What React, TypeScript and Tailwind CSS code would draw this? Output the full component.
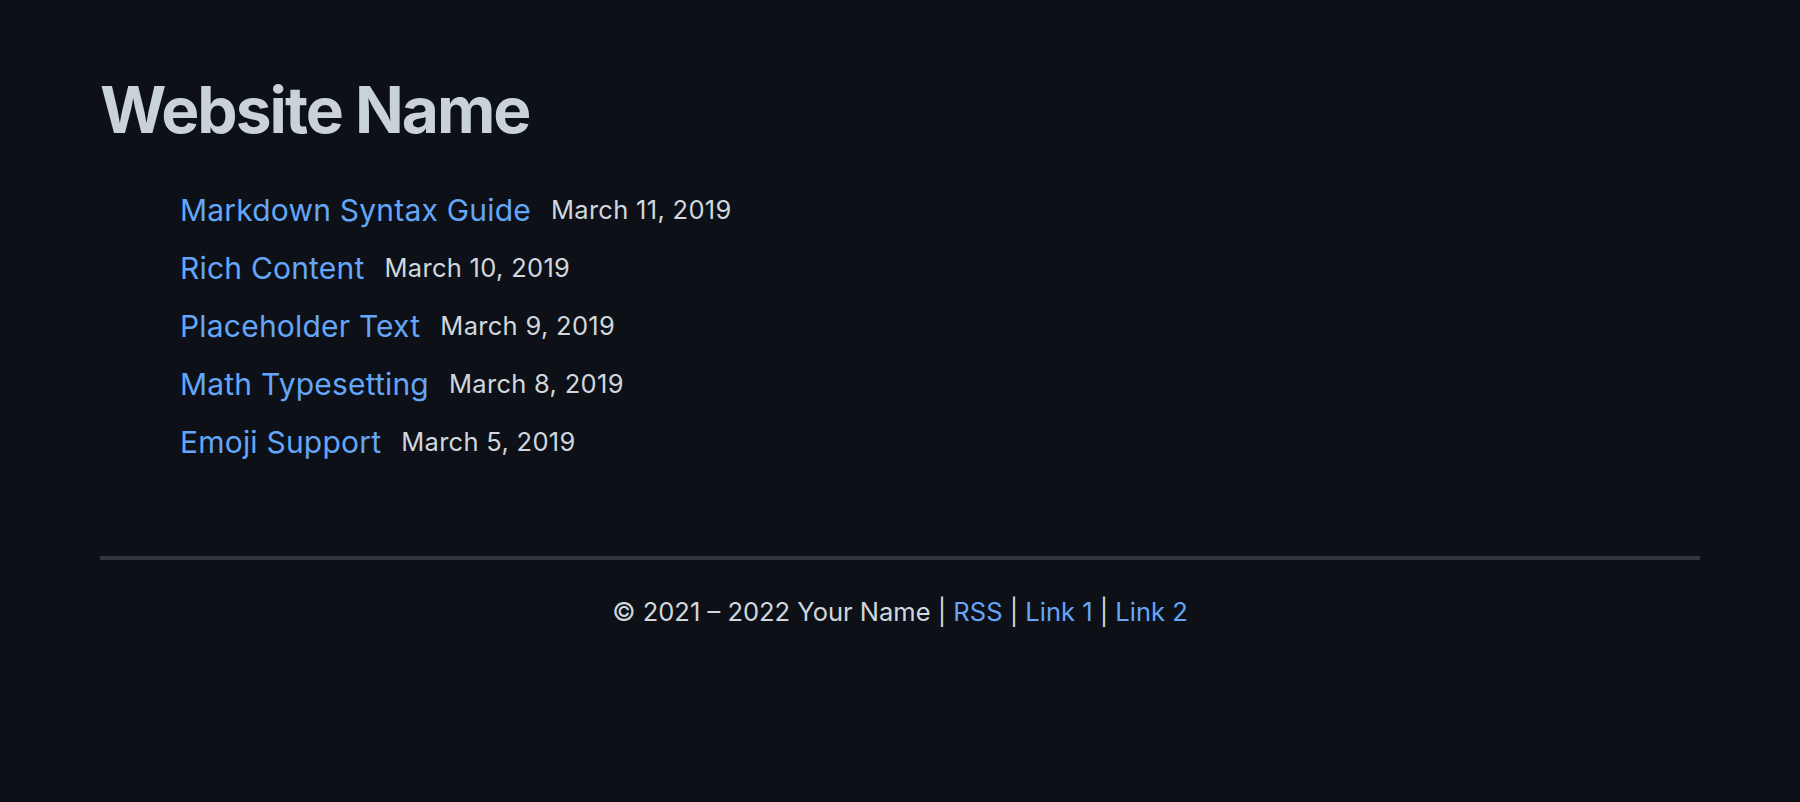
const posts = [
  { title: "Markdown Syntax Guide", date: "March 11, 2019" },
  { title: "Rich Content", date: "March 10, 2019" },
  { title: "Placeholder Text", date: "March 9, 2019" },
  { title: "Math Typesetting", date: "March 8, 2019" },
  { title: "Emoji Support", date: "March 5, 2019" },
];

export default function App() {
  return (
    <div className="min-h-screen bg-[#0d1117] text-[#c9d1d9] font-['Inter',sans-serif] px-[100px] pt-[78px]">
      <h1 className="text-[64px] leading-[64px] font-bold tracking-[-2px] text-[#c9d1d9]">Website Name</h1>

      <ul className="mt-[39px] pl-[80px]">
        {posts.map((p) => (
          <li key={p.title} className="flex items-center gap-[20px] h-[58px]">
            <a href="#" className="text-[30px] leading-[58px] tracking-[0.2px] text-[#64a6f8]">
              {p.title}
            </a>
            <span className="text-[25.5px] tracking-[0.3px] text-[#d0d7de]">{p.date}</span>
          </li>
        ))}
      </ul>

      <hr className="mt-[85px] h-[4px] border-0 bg-[#30363d]" />

      <footer className="mt-[32px] text-center text-[25.5px] leading-[39px] text-[#d0d7de]">
        © 2021 – 2022 Your Name |{" "}
        <a href="#" className="text-[#64a6f8]">RSS</a> |{" "}
        <a href="#" className="text-[#64a6f8]">Link 1</a> |{" "}
        <a href="#" className="text-[#64a6f8]">Link 2</a>
      </footer>
    </div>
  );
}
